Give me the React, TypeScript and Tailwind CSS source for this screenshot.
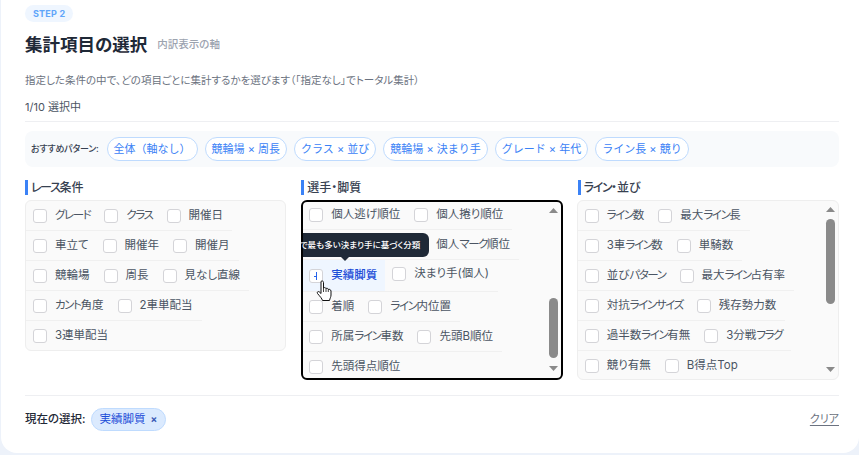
import React from "react";

const chips = ["全体（軸なし）", "競輪場 × 周長", "クラス × 並び", "競輪場 × 決まり手", "グレード × 年代", "ライン長 × 競り"];

const raceRows = [
  ["グレード", "クラス", "開催日"],
  ["車立て", "開催年", "開催月"],
  ["競輪場", "周長", "見なし直線"],
  ["カント角度", "2車単配当"],
  ["3連単配当"],
];

const lineRows = [
  ["ライン数", "最大ライン長"],
  ["3車ライン数", "単騎数"],
  ["並びパターン", "最大ライン占有率"],
  ["対抗ラインサイズ", "残存勢力数"],
  ["過半数ライン有無", "3分戦フラグ"],
  ["競り有無", "B得点Top"],
];

// katakana sits tighter than kanji in the reference font
const Kana = ({ text }: { text: string }) => (
  <span>
    {text.split(/([ァ-ヶー]+)/).map((part, i) =>
      i % 2 === 1 ? (
        <span key={i} className="tracking-[-1.4px]">
          {part}
        </span>
      ) : (
        part
      )
    )}
  </span>
);

const Check = () => (
  <span className="h-[14px] w-[14px] shrink-0 rounded-[3px] border border-[#d4d4d8] bg-white" />
);

const Item = ({ label }: { label: string }) => (
  <span className="flex items-center gap-2 whitespace-nowrap text-[11.5px] text-[#4b5563]">
    <Check />
    <Kana text={label} />
  </span>
);

const Row = ({ items, inset = "pl-[7px]" }: { items: string[]; inset?: string }) => (
  <div className={`flex h-[30px] w-fit items-center gap-[14px] border-b border-[#f0f0f0] pr-[9px] last:border-b-0 ${inset}`}>
    {items.map((label) => (
      <Item key={label} label={label} />
    ))}
  </div>
);

const Heading = ({ label }: { label: string }) => (
  <h3 className="mb-[5px] h-[15px] border-l-[3px] border-[#3b82f6] pl-[3px] text-xs font-medium leading-[15px] text-[#374151]">
    <Kana text={label} />
  </h3>
);

const ScrollBar = ({ thumb }: { thumb: string }) => (
  <div className="absolute bottom-0 right-0 top-0 flex w-[15px] flex-col items-center">
    <svg width="9" height="5" viewBox="0 0 9 5" className="mt-[6px] shrink-0">
      <path d="M0 5 L4.5 0 L9 5 Z" fill="#8a8a8a" />
    </svg>
    <div className={`w-[9px] rounded-full bg-[#8a8a8a] ${thumb}`} />
    <svg width="9" height="5" viewBox="0 0 9 5" className="mb-[7px] mt-auto shrink-0">
      <path d="M0 0 L4.5 5 L9 0 Z" fill="#8a8a8a" />
    </svg>
  </div>
);

export default function App() {
  return (
    <div
      className="h-[455px] w-[859px] overflow-hidden bg-[#edf2fa] pl-px [font-feature-settings:'palt']"
      style={{ fontFamily: "Inter, 'Noto Sans CJK JP', sans-serif" }}
    >
      <div className="h-[453px] rounded-b-2xl bg-white pl-[24px] pr-[20px] pt-[5px]">
        <span className="block h-[17px] w-fit rounded-full bg-[#eff6ff] px-2 text-[9px] font-bold leading-[17px] tracking-wide text-[#60a5fa]">
          STEP 2
        </span>
        <div className="mt-[9px] flex items-center gap-[10px]">
          <h2 className="text-[17.5px] font-bold leading-[27px] text-[#1f2937]">集計項目の選択</h2>
          <span className="text-[10.5px] font-medium text-[#9ca3af]">内訳表示の軸</span>
        </div>
        <p className="mt-[15px] text-[10.5px] leading-[16px] text-[#6b7280]">
          指定した条件の中で、どの項目ごとに集計するかを選びます（「指定なし」でトータル集計）
        </p>
        <p className="mt-[10px] border-b border-[#eeeff2] pb-[6px] text-[11px] leading-[16px] text-[#4b5563]">
          1/10 選択中
        </p>

        <div className="mt-[9px] flex h-9 items-center rounded-lg bg-[#f8fafc] pl-[6px]">
          <span className="mr-[8px] text-[9px] font-medium tracking-[-0.2px] text-[#374151]">おすすめパターン:</span>
          <div className="flex gap-[7px]">
            {chips.map((c) => (
              <span
                key={c}
                className="flex h-6 items-center rounded-xl border border-[#bfdbfe] bg-white px-[6px] text-[11px] text-[#3b82f6] [font-feature-settings:normal]"
              >
                {c}
              </span>
            ))}
          </div>
        </div>

        <div className="mt-[13px] grid grid-cols-3 gap-[15px]">
          <div>
            <Heading label="レース条件" />
            <div className="h-[151px] overflow-hidden rounded-md border border-[#eeeeee] bg-[#fafafa]">
              {raceRows.map((r) => (
                <Row key={r[0]} items={r} />
              ))}
            </div>
          </div>

          <div>
            <Heading label="選手・脚質" />
            <div className="relative h-[180px] rounded-md border-2 border-black bg-[#fafafa]">
              <div className="h-full overflow-hidden">
                <div className="-mt-[2px]">
                  <Row inset="pl-[6px]" items={["個人逃げ順位", "個人捲り順位"]} />
                  <div className="flex h-[30px] w-fit items-center gap-[14px] border-b border-[#f0f0f0] pl-[6px] pr-[9px]">
                    <span className="flex items-center gap-2">
                      <Check />
                      <span className="w-[69px]" />
                    </span>
                    <Item label="個人マーク順位" />
                  </div>
                  <div className="flex h-[32px] w-fit items-center gap-[7px] border-b border-[#f0f0f0] pr-[9px]">
                    <span className="flex h-[31px] items-center gap-2 bg-[#eff6ff] pl-[6px] pr-2 text-[11.5px] font-medium text-[#1d4ed8]">
                      <span className="relative h-[14px] w-[14px] shrink-0 rounded-[3px] border border-[#d4d4d8] bg-white">
                        <span className="absolute left-[6px] top-[2px] h-2 w-px bg-[#2563eb]" />
                        <span className="absolute left-[4px] top-[6px] h-px w-[2px] bg-[#2563eb]" />
                      </span>
                      実績脚質
                    </span>
                    <span className="mb-1">
                      <Item label="決まり手(個人)" />
                    </span>
                  </div>
                  <Row inset="pl-[6px]" items={["着順", "ライン内位置"]} />
                  <Row inset="pl-[6px]" items={["所属ライン車数", "先頭B順位"]} />
                  <Row inset="pl-[6px]" items={["先頭得点順位"]} />
                </div>
              </div>
              <ScrollBar thumb="mt-[85px] h-[60px]" />
              <div className="absolute left-0 top-[31px] flex h-6 w-[126px] items-center justify-end rounded-r-md bg-[#1f2937] pr-[9px] text-[8.5px] font-medium whitespace-nowrap text-white">
                で最も多い決まり手に基づく分類
                <span className="absolute left-[38px] top-full h-0 w-0 border-x-[4px] border-t-[4px] border-x-transparent border-t-[#1f2937]" />
              </div>
              <svg width="18" height="22" viewBox="0 0 18 22" className="absolute left-[13px] top-[78px]">
                <path
                  d="M5 1.5 C6 .5 7.5 1 7.5 2.5 V8 C8.5 7.2 9.6 7.6 10 8.5 C11 8 12 8.4 12.3 9.4 C13.4 9 14.8 9.6 15 11 V15 C15 17 14 18 13.5 20.5 H6.5 C6 18.5 4 16.5 1.5 13.5 C.7 12.3 2 11 3.2 11.8 L5 13.5 Z"
                  fill="#fff"
                  stroke="#111"
                  strokeWidth="1"
                  strokeLinejoin="round"
                />
                <path d="M7.5 8 V12 M10 8.5 V12 M12.3 9.4 V12" stroke="#111" strokeWidth="0.8" fill="none" />
              </svg>
            </div>
          </div>

          <div>
            <Heading label="ライン・並び" />
            <div className="relative -ml-px h-[180px] overflow-hidden rounded-md border border-[#eeeeee] bg-[#fafafa]">
              {lineRows.map((r) => (
                <Row key={r[0]} items={r} />
              ))}
              <ScrollBar thumb="mt-[7px] h-[85px]" />
            </div>
          </div>
        </div>

        <div className="mt-[15px] flex h-[48px] items-center border-t border-[#eeeff2]">
          <span className="mr-[5px] text-[11.5px] font-medium text-[#1f2937]">現在の選択:</span>
          <span className="flex h-[23px] items-center gap-[5px] rounded-full border border-[#bfdbfe] bg-[#dbeafe] px-[8px] text-[11.5px] text-[#1d4ed8]">
            実績脚質
            <span className="text-[10px] font-bold text-[#3b5bb5]">×</span>
          </span>
          <a className="ml-auto text-[11px] text-[#6b7280] underline underline-offset-2">クリア</a>
        </div>
      </div>
    </div>
  );
}
